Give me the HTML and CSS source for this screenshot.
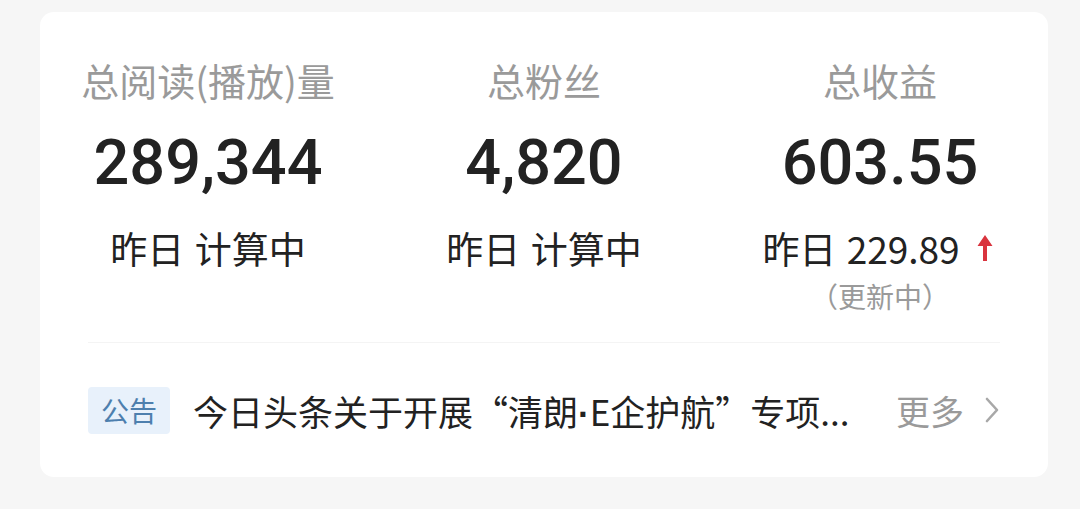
FILE: index.html
```html
<!DOCTYPE html>
<html lang="zh-CN">
<head>
<meta charset="utf-8">
<title>数据概览</title>
<link rel="stylesheet" href="styles.css">
</head>
<body>
<div class="card">
  <div class="stats">
    <div class="stat">
      <div class="label">总阅读(播放)量</div>
      <div class="value">289,344</div>
      <div class="sub">昨日 计算中</div>
    </div>
    <div class="stat">
      <div class="label">总粉丝</div>
      <div class="value">4,820</div>
      <div class="sub">昨日 计算中</div>
    </div>
    <div class="stat">
      <div class="label">总收益</div>
      <div class="value">603.55</div>
      <div class="sub earn">昨日 229.89<svg class="up" viewBox="0 0 18 30" width="18" height="30"><path d="M9 2 L1.5 13 H7 V28 H11 V13 H16.5 Z" fill="#d9343e"/></svg></div>
      <div class="note">（更新中）</div>
    </div>
  </div>
  <div class="divider"></div>
  <div class="notice">
    <span class="badge">公告</span>
    <span class="title">今日头条关于开展“清朗<span class="dot">·</span>E企护航”专项...</span>
    <span class="more">更多<svg class="chev" viewBox="0 0 16 28" width="16" height="28"><path d="M3 3 L13 14 L3 25" fill="none" stroke="#a8a8a8" stroke-width="2.6" stroke-linecap="round" stroke-linejoin="round"/></svg></span>
  </div>
</div>
</body>
</html>
```

FILE: styles.css
```css
html, body {
  margin: 0;
  padding: 0;
}
body {
  background: #f6f6f6;
  font-family: "Noto Sans CJK SC", "Noto Sans", sans-serif;
  width: 1080px;
  height: 509px;
  overflow: hidden;
  padding-top: 12px;
  box-sizing: border-box;
}
.card {
  margin-left: 40px;
  width: 1008px;
  height: 465px;
  background: #ffffff;
  border-radius: 14px;
  box-sizing: border-box;
  padding-top: 46px;
}
.stats {
  display: grid;
  grid-template-columns: repeat(3, 1fr);
}
.stat {
  display: flex;
  flex-direction: column;
  align-items: center;
}
.label {
  font-size: 38px;
  line-height: 44px;
  color: #9a9a9a;
}
.value {
  margin-top: 25px;
  font-family: Roboto, "Noto Sans", sans-serif;
  font-weight: 500;
  font-size: 63px;
  line-height: 72px;
  color: #222222;
}
.sub {
  margin-top: 27px;
  font-size: 37px;
  line-height: 44px;
  color: #222222;
  display: flex;
  align-items: center;
  word-spacing: 2px;
}
.earn {
  position: relative;
  left: -2px;
}
.up {
  margin-left: 16px;
}
.note {
  margin-top: 8px;
  font-size: 28px;
  line-height: 36px;
  color: #9a9a9a;
}
.divider {
  margin: 28px 48px 0;
  height: 1px;
  background: #f4f4f4;
}
.notice {
  margin: 43px 48px 0;
  height: 48px;
  display: flex;
  align-items: center;
}
.badge {
  width: 82px;
  height: 47px;
  border-radius: 4px;
  background: #e8f1fb;
  color: #4d7fae;
  font-size: 28px;
  line-height: 47px;
  text-align: center;
}
.title {
  margin-left: 23px;
  flex: 1;
  font-size: 35px;
  color: #222222;
  white-space: nowrap;
  overflow: hidden;
}
.dot {
  font-family: "Liberation Sans", sans-serif;
  font-weight: 700;
}
.more {
  font-size: 34px;
  color: #9a9a9a;
  display: flex;
  align-items: center;
  gap: 20px;
  margin-right: 0;
}
```
